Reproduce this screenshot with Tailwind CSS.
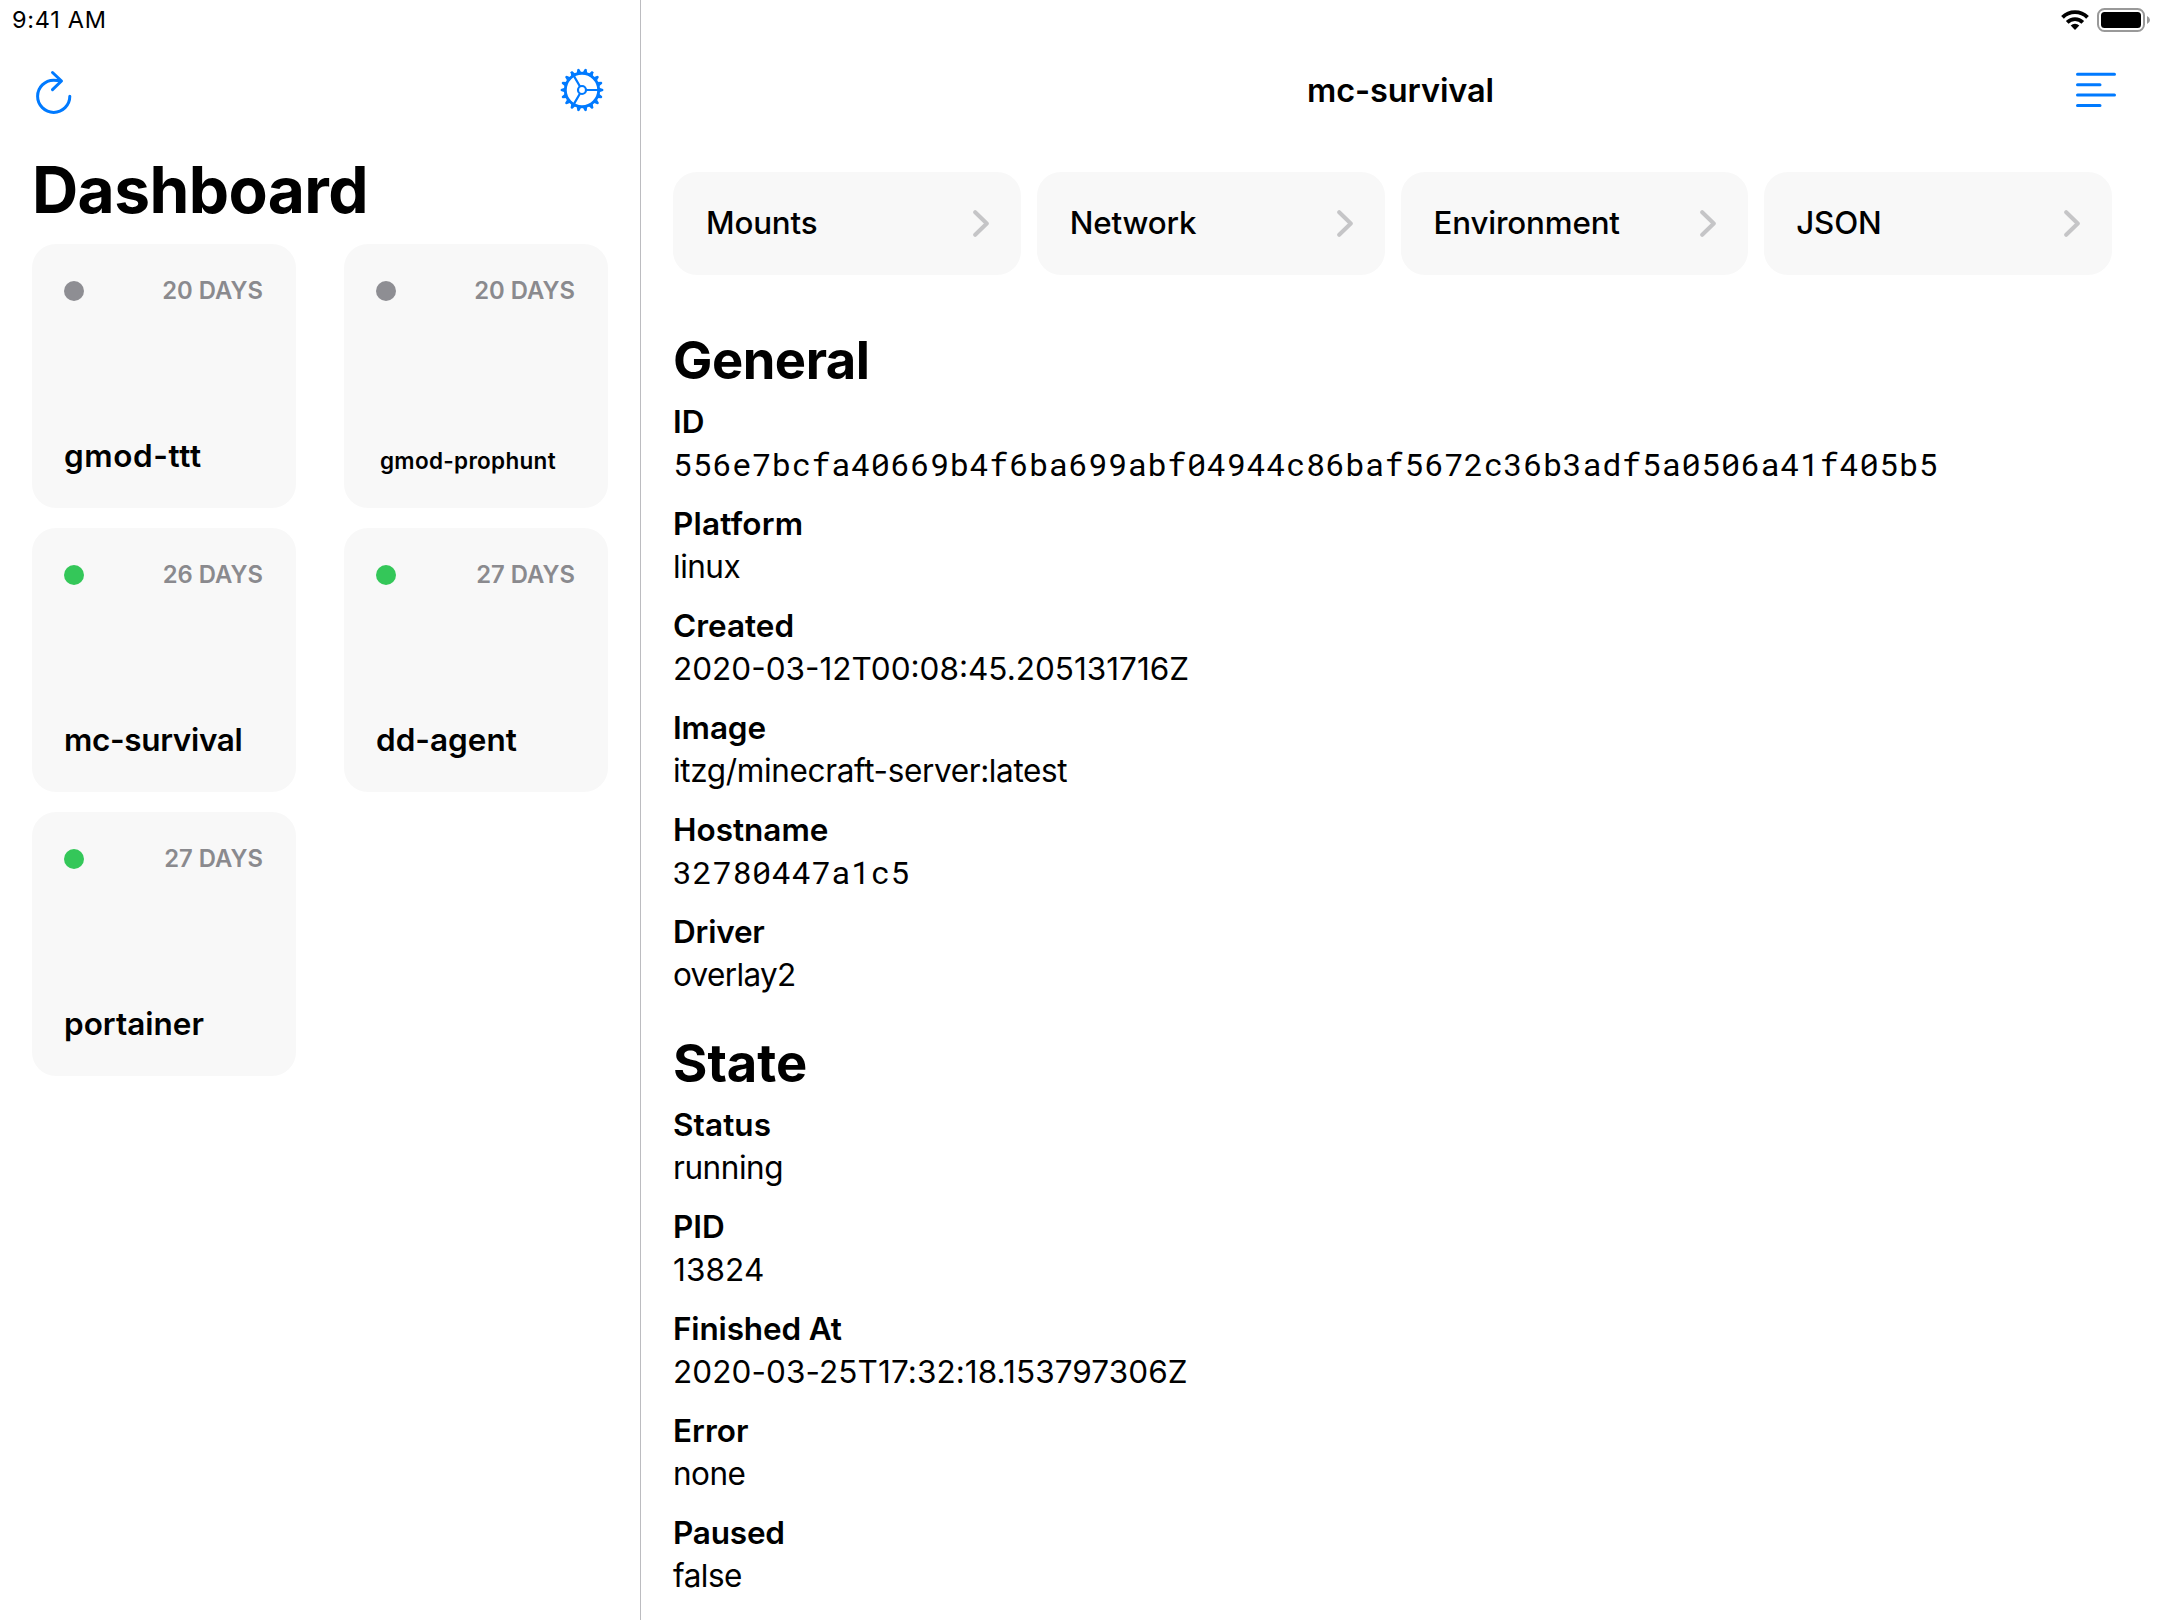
<!DOCTYPE html>
<html lang="en">
<head>
<meta charset="utf-8">
<title>Dashboard</title>
<script src="https://cdn.jsdelivr.net/npm/@tailwindcss/browser@4"></script>
</head>
<body class="flex h-[1620px] w-[2160px] overflow-hidden bg-white font-['Inter',sans-serif] text-black">

<!-- Sidebar -->
<aside class="flex w-[641px] shrink-0 flex-col border-r border-[#bcbcc0]">
  <div class="h-10 pl-3 text-[23.5px] leading-[39px] font-normal tracking-[0.7px]">9:41 AM</div>
  <nav class="flex h-[100px] items-center justify-between pr-9 pl-8">
    <svg class="mt-1 h-12 w-11" viewBox="32 68 44 48" fill="none" stroke="#007aff" stroke-width="3" stroke-linecap="round" stroke-linejoin="round">
      <path d="M69.8 96.3A16.1 16.1 0 1 1 53.7 80.2Q57 80.2 61 81M52.5 72.5L61.5 81L52.5 89.6"/>
    </svg>
    <svg class="size-11" viewBox="-22 -22 44 44" fill="none" stroke="#007aff">
      <defs><path id="tooth" d="M16.5 -2.6L21 -1.1Q22 0 21 1.1L16.5 2.6Z" fill="#007aff" stroke="none"/></defs>
      <circle r="16.7" stroke-width="2.9"/>
      <circle r="4" stroke-width="2.2"/>
      <path stroke-width="2.2" d="M4 0H16.5M-2 -3.5L-8.3 -14.4M-2 3.5L-8.3 14.4"/>
      <g id="teeth"></g>
    </svg>
  </nav>
  <h1 class="mt-3 pl-8 text-[64px] leading-[76px] font-bold tracking-[-0.6px]">Dashboard</h1>
  <div class="mt-4 grid grid-cols-[264px_264px] justify-between gap-y-5 pr-8 pl-8">
    <div class="flex h-[264px] flex-col justify-between rounded-3xl bg-[#f8f8f8] p-8">
      <div class="flex h-[30px] items-center justify-between pr-px"><span class="size-5 rounded-full bg-[#8e8e93]"></span><span class="text-[23.8px] leading-[28px] font-semibold text-[#8a8a8e]">20 DAYS</span></div>
      <div class="text-[31.5px] leading-10 font-semibold tracking-[0.6px]">gmod-ttt</div>
    </div>
    <div class="flex h-[264px] flex-col justify-between rounded-3xl bg-[#f8f8f8] p-8">
      <div class="flex h-[30px] items-center justify-between pr-px"><span class="size-5 rounded-full bg-[#8e8e93]"></span><span class="text-[23.8px] leading-[28px] font-semibold text-[#8a8a8e]">20 DAYS</span></div>
      <div class="pl-1 text-[22.5px] leading-[31px] font-semibold tracking-[0.3px]">gmod-prophunt</div>
    </div>
    <div class="flex h-[264px] flex-col justify-between rounded-3xl bg-[#f8f8f8] p-8">
      <div class="flex h-[30px] items-center justify-between pr-px"><span class="size-5 rounded-full bg-[#34c759]"></span><span class="text-[23.8px] leading-[28px] font-semibold text-[#8a8a8e]">26 DAYS</span></div>
      <div class="text-[31.5px] leading-10 font-semibold tracking-[-0.35px]">mc-survival</div>
    </div>
    <div class="flex h-[264px] flex-col justify-between rounded-3xl bg-[#f8f8f8] p-8">
      <div class="flex h-[30px] items-center justify-between pr-px"><span class="size-5 rounded-full bg-[#34c759]"></span><span class="text-[23.8px] leading-[28px] font-semibold text-[#8a8a8e]">27 DAYS</span></div>
      <div class="text-[31.5px] leading-10 font-semibold">dd-agent</div>
    </div>
    <div class="flex h-[264px] flex-col justify-between rounded-3xl bg-[#f8f8f8] p-8">
      <div class="flex h-[30px] items-center justify-between pr-px"><span class="size-5 rounded-full bg-[#34c759]"></span><span class="text-[23.8px] leading-[28px] font-semibold text-[#8a8a8e]">27 DAYS</span></div>
      <div class="text-[31.5px] leading-10 font-semibold">portainer</div>
    </div>
  </div>
</aside>

<!-- Detail pane -->
<main class="flex min-w-0 flex-1 flex-col">
  <div class="flex h-10 items-center justify-end gap-2 pr-2.5">
    <svg class="h-5 w-7" viewBox="0 0 28 20" fill="none" stroke="#000" stroke-width="3.8">
      <path d="M1.5 7.4A17.6 17.6 0 0 1 26.5 7.4"/>
      <path d="M6.2 12.4A11 11 0 0 1 21.8 12.4"/>
      <path d="M14 20L9.7 15.6A6.2 6.2 0 0 1 18.3 15.6Z" fill="#000" stroke="none"/>
    </svg>
    <svg class="h-6 w-[53px]" viewBox="0 0 53 24">
      <rect x="1" y="1" width="46" height="22" rx="6.5" fill="none" stroke="#999" stroke-width="2"/>
      <rect x="4" y="4" width="40" height="16" rx="3.5"/>
      <path d="M50 8Q53 9.3 53 12T50 16Z" fill="#999"/>
    </svg>
  </div>
  <nav class="grid h-[100px] grid-cols-[1fr_auto_1fr] items-center px-11">
    <span></span>
    <h2 class="pt-0.5 text-[32.5px] leading-10 font-semibold tracking-[-0.1px]">mc-survival</h2>
    <svg class="h-9 w-10 justify-self-end" viewBox="0 0 40 36" fill="none" stroke="#007aff" stroke-width="3" stroke-linecap="round">
      <path d="M1.5 2.3H38.5M1.5 12.8H24M1.5 23.1H38.5M1.5 33.5H24"/>
    </svg>
  </nav>

  <div class="flex flex-col pr-12 pl-8 pt-8">
    <div class="grid grid-cols-4 gap-4 text-[31.3px] leading-10 font-medium tracking-[-0.15px]">
      <div class="flex h-[103px] items-center justify-between rounded-3xl bg-[#f8f8f8] px-8"><span class="pb-0.5 pl-px">Mounts</span>
        <svg class="h-[27px] w-4" viewBox="0 0 16 27" fill="none" stroke="#c5c5c7" stroke-width="4" stroke-linecap="round" stroke-linejoin="round"><path d="M2.2 2.2L13.8 13.5L2.2 24.8"/></svg></div>
      <div class="flex h-[103px] items-center justify-between rounded-3xl bg-[#f8f8f8] px-8"><span class="pb-0.5 pl-px">Network</span>
        <svg class="h-[27px] w-4" viewBox="0 0 16 27" fill="none" stroke="#c5c5c7" stroke-width="4" stroke-linecap="round" stroke-linejoin="round"><path d="M2.2 2.2L13.8 13.5L2.2 24.8"/></svg></div>
      <div class="flex h-[103px] items-center justify-between rounded-3xl bg-[#f8f8f8] px-8"><span class="pb-0.5 pl-px">Environment</span>
        <svg class="h-[27px] w-4" viewBox="0 0 16 27" fill="none" stroke="#c5c5c7" stroke-width="4" stroke-linecap="round" stroke-linejoin="round"><path d="M2.2 2.2L13.8 13.5L2.2 24.8"/></svg></div>
      <div class="flex h-[103px] items-center justify-between rounded-3xl bg-[#f8f8f8] px-8"><span class="pb-0.5">JSON</span>
        <svg class="h-[27px] w-4" viewBox="0 0 16 27" fill="none" stroke="#c5c5c7" stroke-width="4" stroke-linecap="round" stroke-linejoin="round"><path d="M2.2 2.2L13.8 13.5L2.2 24.8"/></svg></div>
    </div>

    <section class="mt-[53px]">
      <h2 class="text-[52.5px] leading-[64px] font-bold tracking-[-0.5px]">General</h2>
      <dl class="mt-2 flex flex-col gap-4 text-[31.5px] leading-[43px]">
        <div><dt class="font-semibold">ID</dt><dd class="h-[43px] font-['Roboto_Mono',monospace] text-[32px] leading-[42px] tracking-[0.57px]">556e7bcfa40669b4f6ba699abf04944c86baf5672c36b3adf5a0506a41f405b5</dd></div>
        <div><dt class="font-semibold tracking-[0.2px]">Platform</dt><dd class="tracking-[-0.5px]">linux</dd></div>
        <div><dt class="font-semibold">Created</dt><dd>2020-03-12T00:08:45.205131716Z</dd></div>
        <div><dt class="font-semibold tracking-[-0.1px]">Image</dt><dd class="tracking-[-0.36px]">itzg/minecraft-server:latest</dd></div>
        <div><dt class="font-semibold">Hostname</dt><dd class="h-[43px] font-['Roboto_Mono',monospace] text-[32px] leading-[42px] tracking-[0.57px]">32780447a1c5</dd></div>
        <div><dt class="font-semibold tracking-[-0.2px]">Driver</dt><dd class="tracking-[-0.65px]">overlay2</dd></div>
      </dl>
    </section>

    <section class="mt-[35px]">
      <h2 class="text-[52.5px] leading-[64px] font-bold">State</h2>
      <dl class="mt-2 flex flex-col gap-4 text-[31.5px] leading-[43px]">
        <div><dt class="font-semibold tracking-[0.1px]">Status</dt><dd class="tracking-[-0.45px]">running</dd></div>
        <div><dt class="font-semibold">PID</dt><dd class="tracking-[0.1px]">13824</dd></div>
        <div><dt class="font-semibold tracking-[-0.15px]">Finished At</dt><dd class="tracking-[0.08px]">2020-03-25T17:32:18.153797306Z</dd></div>
        <div><dt class="font-semibold">Error</dt><dd class="tracking-[-0.5px]">none</dd></div>
        <div><dt class="font-semibold tracking-[-0.2px]">Paused</dt><dd class="tracking-[-0.5px]">false</dd></div>
      </dl>
    </section>
  </div>
</main>

<script>
  // Eighteen evenly spaced gear teeth
  document.getElementById('teeth').innerHTML = Array.from({ length: 18 }, (_, i) => `<use href="#tooth" transform="rotate(${i * 20})"/>`).join('');
</script>
</body>
</html>
